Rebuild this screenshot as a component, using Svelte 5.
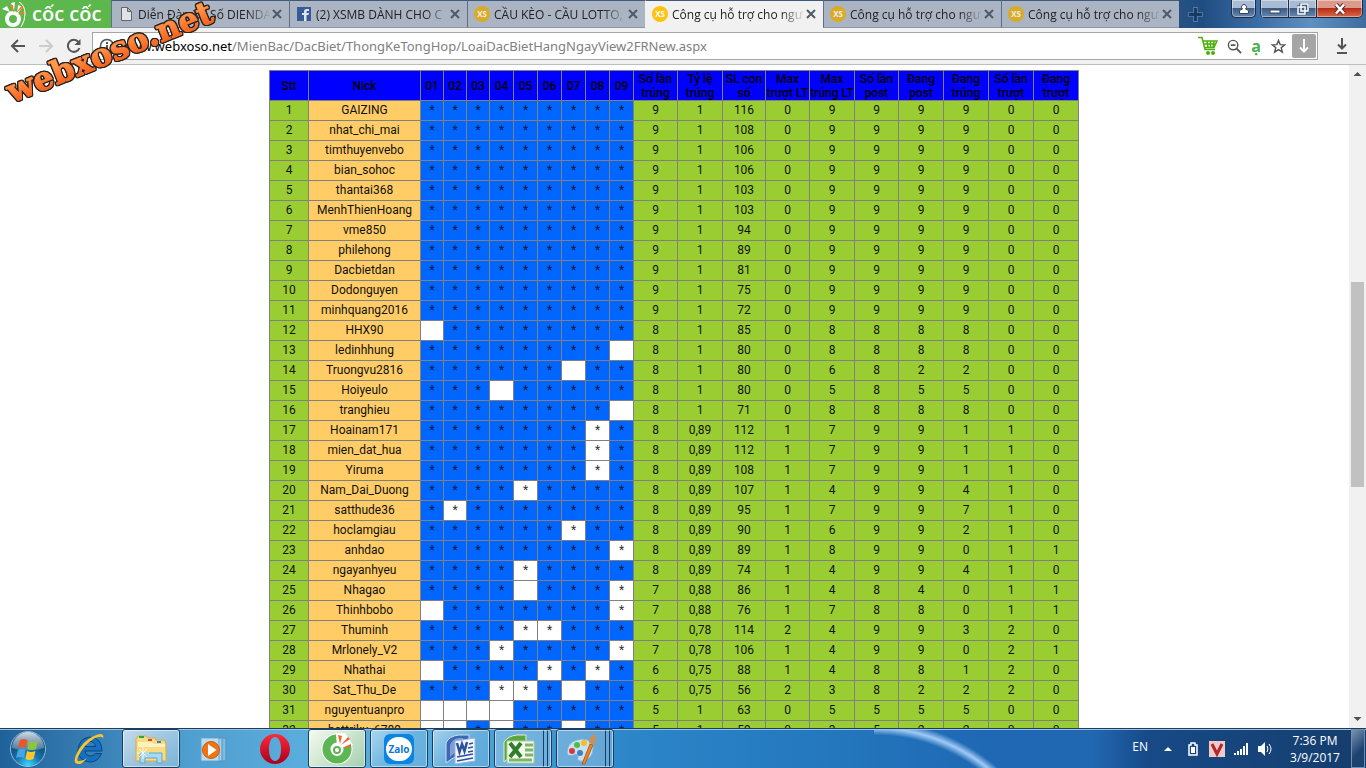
<script lang="ts">
	type Tab = { title: string; icon: 'page' | 'fb' | 'xs'; active?: boolean };

	const tabs: Tab[] = [
		{ title: 'Diễn Đàn Xổ Số DIENDA', icon: 'page' },
		{ title: '(2) XSMB DÀNH CHO C', icon: 'fb' },
		{ title: 'CẦU KÈO - CẦU LOTTO,', icon: 'xs' },
		{ title: 'Công cụ hỗ trợ cho ngư', icon: 'xs', active: true },
		{ title: 'Công cụ hỗ trợ cho ngư', icon: 'xs' },
		{ title: 'Công cụ hỗ trợ cho ngư', icon: 'xs' }
	];

	const days = ['01', '02', '03', '04', '05', '06', '07', '08', '09'];
	const statHeads = [
		'Số lần trúng', 'Tỷ lệ trúng', 'SL con số', 'Max trượt LT', 'Max trúng LT',
		'Số lần post', 'Đang post', 'Đang trúng', 'Số lần trượt', 'Đang trượt'
	];

	// days: * = hit, o = posted but missed, - = no post
	const data: [string, string, string][] = [
		['GAIZING', '*********', '9 1 116 0 9 9 9 9 0 0'],
		['nhat_chi_mai', '*********', '9 1 108 0 9 9 9 9 0 0'],
		['timthuyenvebo', '*********', '9 1 106 0 9 9 9 9 0 0'],
		['bian_sohoc', '*********', '9 1 106 0 9 9 9 9 0 0'],
		['thantai368', '*********', '9 1 103 0 9 9 9 9 0 0'],
		['MenhThienHoang', '*********', '9 1 103 0 9 9 9 9 0 0'],
		['vme850', '*********', '9 1 94 0 9 9 9 9 0 0'],
		['philehong', '*********', '9 1 89 0 9 9 9 9 0 0'],
		['Dacbietdan', '*********', '9 1 81 0 9 9 9 9 0 0'],
		['Dodonguyen', '*********', '9 1 75 0 9 9 9 9 0 0'],
		['minhquang2016', '*********', '9 1 72 0 9 9 9 9 0 0'],
		['HHX90', '-********', '8 1 85 0 8 8 8 8 0 0'],
		['ledinhhung', '********-', '8 1 80 0 8 8 8 8 0 0'],
		['Truongvu2816', '******-**', '8 1 80 0 6 8 2 2 0 0'],
		['Hoiyeulo', '***-*****', '8 1 80 0 5 8 5 5 0 0'],
		['tranghieu', '********-', '8 1 71 0 8 8 8 8 0 0'],
		['Hoainam171', '*******o*', '8 0,89 112 1 7 9 9 1 1 0'],
		['mien_dat_hua', '*******o*', '8 0,89 112 1 7 9 9 1 1 0'],
		['Yiruma', '*******o*', '8 0,89 108 1 7 9 9 1 1 0'],
		['Nam_Dai_Duong', '****o****', '8 0,89 107 1 4 9 9 4 1 0'],
		['satthude36', '*o*******', '8 0,89 95 1 7 9 9 7 1 0'],
		['hoclamgiau', '******o**', '8 0,89 90 1 6 9 9 2 1 0'],
		['anhdao', '********o', '8 0,89 89 1 8 9 9 0 1 1'],
		['ngayanhyeu', '****o****', '8 0,89 74 1 4 9 9 4 1 0'],
		['Nhagao', '****-***o', '7 0,88 86 1 4 8 4 0 1 1'],
		['Thinhbobo', '-*******o', '7 0,88 76 1 7 8 8 0 1 1'],
		['Thuminh', '****oo***', '7 0,78 114 2 4 9 9 3 2 0'],
		['Mrlonely_V2', '***o****o', '7 0,78 106 1 4 9 9 0 2 1'],
		['Nhathai', '-****o*o*', '6 0,75 88 1 4 8 8 1 2 0'],
		['Sat_Thu_De', '***oo*-**', '6 0,75 56 2 3 8 2 2 2 0'],
		['nguyentuanpro', '----*****', '5 1 63 0 5 5 5 5 0 0'],
		['hattriku_6789', '--*-**-**', '5 1 59 0 3 5 2 2 0 0']
	];
	const rows = data.map(([nick, marks, stats]) => ({
		nick,
		marks: marks.split(''),
		stats: stats.split(' ')
	}));
</script>

<div class="screen">
	<header class="tabstrip">
		<div class="brand">
			<svg class="brand-icon" viewBox="0 0 28 28" aria-hidden="true">
				<circle cx="13" cy="19" r="6" fill="none" stroke="#fff" stroke-width="4" />
				<path d="M2 9l5-3 3 6zM11 3l4-1-1 9zM18 5l5 2-6 7z" fill="#fff" />
				<path d="M10 5l3 0 1 8zM16 13l6-8 2 2zM18 15l7-4v3z" fill="#f47b20" />
				<path d="M19 2q6 3 6 12 0 7-4 13" fill="none" stroke="#fff" stroke-width="1" />
			</svg>
			<span class="brand-name">cốc cốc</span>
		</div>
		<nav class="tabs">
			{#each tabs as tab}
				<div class="tab" class:active={tab.active}>
					{#if tab.icon === 'page'}
						<svg class="fav" viewBox="0 0 16 16" aria-hidden="true">
							<path d="M3.500 1.500h6l4 4v9h-10zM9.500 1.500v4h4" fill="#dfe2e7" stroke="#666" />
						</svg>
					{:else if tab.icon === 'fb'}
						<svg class="fav" viewBox="0 0 16 16" aria-hidden="true">
							<rect x="1" y="1" width="14" height="14" fill="#3a5999" />
							<path d="M8 15V9H6V7h2V5.500Q8 3 10.500 3H13v2h-1.500Q10.500 5 10.500 6v1H13l-.5 2h-2v6z" fill="#dde3ec" />
						</svg>
					{:else}
						<span class="xs">XS</span>
					{/if}
					<a class="tab-title" href="#tab">{tab.title}</a>
					<button class="tab-close" aria-label="Close tab">
						<svg viewBox="0 0 10 10"><path d="M1 1l8 8M9 1l-8 8" /></svg>
					</button>
				</div>
			{/each}
		</nav>
		<button class="new-tab" aria-label="New tab">
			<svg viewBox="0 0 16 16">
				<path d="M8 0v16M0 8h16" stroke="#5b7da6" stroke-width="5" />
				<path d="M8 1v14M1 8h14" stroke="#163a63" stroke-width="3" />
			</svg>
		</button>
		<div class="window-controls">
			<button class="win user" aria-label="Profile">
				<svg viewBox="0 0 12 12"><path d="M1.500 10.500v-3l3-1.500a2.500 2.500 0 1 1 3 0l3 1.500v3z" fill="#fff" stroke="#38445a" /></svg>
			</button>
			<div class="win-group">
				<button class="win" aria-label="Minimize">
					<svg viewBox="0 0 12 12"><rect x="1" y="7" width="10" height="3" fill="#fff" stroke="#38445a" /></svg>
				</button>
				<button class="win" aria-label="Restore">
					<svg viewBox="0 0 12 12">
						<path d="M4 1h7v7H4zM1 4h7v7H1z" fill="none" stroke="#38445a" stroke-width="3" />
						<path d="M4 1h7v7H4zM1 4h7v7H1z" fill="#44608a" stroke="#fff" stroke-width="1.500" />
					</svg>
				</button>
				<button class="win close" aria-label="Close">
					<svg viewBox="0 0 12 12">
						<path d="M2 1.500l8 9M10 1.500l-8 9" stroke="#5a2a30" stroke-width="4.500" />
						<path d="M2 1.500l8 9M10 1.500l-8 9" stroke="#fff" stroke-width="2.500" />
					</svg>
				</button>
			</div>
		</div>
	</header>

	<div class="toolbar">
		<button class="tool" aria-label="Back">
			<svg viewBox="0 0 16 16"><path d="M15 8H2M8 2L2 8l6 6" /></svg>
		</button>
		<button class="tool off" aria-label="Forward">
			<svg viewBox="0 0 16 16"><path d="M1 8h13M8 2l6 6-6 6" /></svg>
		</button>
		<button class="tool" aria-label="Reload">
			<svg viewBox="0 0 16 16">
				<path d="M13.500 10A6 6 0 1 1 12.500 4" />
				<path d="M14.500 1v6h-6z" fill="#555" stroke="none" />
			</svg>
		</button>
		<div class="omnibox">
			<svg class="info" viewBox="0 0 16 16" aria-hidden="true">
				<circle cx="8" cy="8" r="6.500" fill="none" stroke="#555" stroke-width="1.500" />
				<path d="M8 4v2M8 7v5" stroke="#555" stroke-width="2" />
			</svg>
			<div class="url"><span>www.webxoso.net</span>/MienBac/DacBiet/ThongKeTongHop/LoaiDacBietHangNgayView2FRNew.aspx</div>
			<button class="act cart" aria-label="Shopping">
				<svg viewBox="0 0 20 20">
					<path d="M0 1.500h4l3 12h10M5 5h14l-3 6.500H6.500M6 8h12M9 5l1 6M12.500 5v6M16 5l-1 6" fill="none" stroke="#4caf0c" stroke-width="1.500" />
					<circle cx="10" cy="17" r="2" fill="#4caf0c" /><circle cx="15" cy="17" r="2" fill="#4caf0c" />
				</svg>
			</button>
			<button class="act" aria-label="Zoom out">
				<svg viewBox="0 0 16 16"><circle cx="6.500" cy="6.500" r="5" fill="none" stroke="#555" stroke-width="1.500" /><path d="M10 10l5 5M4 6.500h5" stroke="#555" stroke-width="2" /></svg>
			</button>
			<button class="act accent" aria-label="Vietnamese accents">ạ</button>
			<button class="act" aria-label="Bookmark">
				<svg viewBox="0 0 16 16"><path d="M8 1.500l1.800 4.500 4.700.3-3.600 3 1.200 4.700L8 11.400 3.900 14l1.200-4.700-3.600-3 4.700-.3z" fill="none" stroke="#555" stroke-width="1.500" /></svg>
			</button>
			<button class="save" aria-label="Download media">
				<svg viewBox="0 0 16 16"><path d="M8 1v12M4 9.500l4 4 4-4" fill="none" stroke="#fff" stroke-width="2" /></svg>
			</button>
		</div>
		<button class="tool downloads" aria-label="Downloads">
			<svg viewBox="0 0 16 16"><path d="M8 0v10M4 6.500l4 4 4-4M3 15h10" /></svg>
		</button>
	</div>

	<div class="viewport">
		<main class="page">
			<table>
				<colgroup>
					<col class="c-stt" />
					<col class="c-nick" />
					<col class="c-day-s" span="3" />
					<col class="c-day" span="6" />
					<col class="c-44" />
					<col class="c-45" />
					<col class="c-43" />
					<col class="c-44" />
					<col class="c-45" />
					<col class="c-44" />
					<col class="c-45" span="4" />
				</colgroup>
				<thead>
					<tr>
						<th>Stt</th>
						<th>Nick</th>
						{#each days as day}<th>{day}</th>{/each}
						{#each statHeads as head}<th>{head}</th>{/each}
					</tr>
				</thead>
				<tbody>
					{#each rows as row, i}
						<tr>
							<td>{i + 1}</td>
							<td class="nick">{row.nick}</td>
							{#each row.marks as mark}
								<td class={mark === '*' ? 'hit' : 'miss'}>{mark === '-' ? '' : '*'}</td>
							{/each}
							{#each row.stats as stat}<td>{stat}</td>{/each}
						</tr>
					{/each}
				</tbody>
			</table>
		</main>
		<div class="scrollbar">
			<svg class="arrow" viewBox="0 0 17 17" aria-hidden="true"><path d="M8.500 7l4 4h-8z" fill="#505050" /></svg>
			<div class="before"></div>
			<div class="thumb"></div>
			<div class="after"></div>
			<svg class="arrow" viewBox="0 0 17 17" aria-hidden="true"><path d="M4.500 6h8l-4 4z" fill="#505050" /></svg>
		</div>
	</div>

	<footer class="taskbar">
		<button class="start" aria-label="Start">
			<svg viewBox="0 0 38 38">
				<defs>
					<radialGradient id="orb" cx=".5" cy=".95" r=".8">
						<stop offset="0" stop-color="#35d6ff" /><stop offset=".45" stop-color="#1672a8" /><stop offset="1" stop-color="#123f6e" />
					</radialGradient>
					<linearGradient id="shine" x2="0" y2="1"><stop offset="0" stop-color="#fff" stop-opacity=".8" /><stop offset="1" stop-color="#fff" stop-opacity=".2" /></linearGradient>
				</defs>
				<circle cx="19" cy="19" r="17.500" fill="url(#orb)" stroke="#8cc0dc" />
				<path d="M3 18a16 16 0 0 1 32 0q-16 5-32 0z" fill="url(#shine)" />
				<path d="M11 10q4-2 7.500 0l-1.500 8q-4-2-8 0z" fill="#e8562a" />
				<path d="M20 11q4 2 9 0l-2 8q-4 2-8.500 0z" fill="#8cc63f" />
				<path d="M9 20q4-2 7.500 0l-1.500 8q-4-2-8 0z" fill="#45a5e6" />
				<path d="M18 21q4 2 8.500 0l-2 8q-4 2-8 0z" fill="#ffc72c" />
			</svg>
		</button>
		<button class="task" aria-label="Internet Explorer">
			<svg viewBox="0 0 32 32">
				<path d="M29 18H12q1 5 5.500 5 3 0 5-2.500h6Q25 29 17 29 5 28 5 17 6 5 17 4q12 1 12 14zM12 13.500h10.500q-1-5-5.250-5t-5.250 5z" fill="#1470c0" stroke="#0a4580" />
				<path d="M7 31q-8 1-4-9Q9 8 21 3q11-5 9 3 0-4-8-1Q10 12 5 24q-2 5 2 4 3 0 7-3-4 5-7 6z" fill="#f8c52c" />
			</svg>
		</button>
		<button class="task open bright" aria-label="Windows Explorer">
			<svg viewBox="0 0 32 32">
				<path d="M1 6l2-3h8l2 2h7l1 2h8l2 3v18H1z" fill="#f7dc85" stroke="#d6ab4b" />
				<path d="M3 9h14l2 2h11v3H3z" fill="#fff2bd" />
				<rect x="4" y="3" width="5" height="2" fill="#28a745" /><rect x="13" y="6" width="4" height="2" fill="#d84a33" /><rect x="22" y="8" width="4" height="2" fill="#2784d8" />
				<path d="M5 30V20h22v10h-5v-5H10v5z" fill="#a7daf2" stroke="#5ba9cf" />
				<path d="M8 14v12M2 20h12M4 16l8 8M12 16l-8 8" stroke="#fff" stroke-opacity=".8" />
			</svg>
		</button>
		<button class="task" aria-label="Windows Media Player">
			<svg viewBox="0 0 32 32">
				<path d="M10 5h19v23H10z" fill="#7dbbe0" stroke="#5592c0" />
				<path d="M7 5h18v23H7z" fill="#a4d2ec" stroke="#5592c0" />
				<path d="M4 5h18v23H4z" fill="#b9ddf0" stroke="#6aa5ce" />
				<circle cx="14" cy="17" r="8.500" fill="#ee7416" stroke="#cf5a0d" />
				<path d="M11 11l8.500 6-8.500 6z" fill="#fff" />
			</svg>
		</button>
		<button class="task" aria-label="Opera">
			<svg viewBox="0 0 32 32">
				<defs><linearGradient id="opera" x2="0" y2="1"><stop offset="0" stop-color="#ff2939" /><stop offset="1" stop-color="#a8001c" /></linearGradient></defs>
				<path fill-rule="evenodd" d="M16 1a15 15 0 1 1 0 30 15 15 0 0 1 0-30zm0 3c-4 0-6 5-6 12s2 12 6 12 6-5 6-12-2-12-6-12z" fill="url(#opera)" />
			</svg>
		</button>
		<button class="task open current" aria-label="Cốc Cốc">
			<svg viewBox="0 0 32 32">
				<circle cx="16" cy="16" r="15.500" fill="#fff" />
				<circle cx="16" cy="16" r="10.500" fill="none" stroke="#5bb653" stroke-width="8" />
				<path d="M16 16L15 0h9l8 12z" fill="#fff" />
				<path d="M17 2l4 1-2 8zM20 12l7-8 2 2zM21 15l9-4v3z" fill="#f0642c" />
				<circle cx="16" cy="17" r="5" fill="#5bb653" stroke="#fff" stroke-width="2" />
				<circle cx="16" cy="17" r="2" fill="#fff" />
			</svg>
		</button>
		<button class="task open" aria-label="Zalo">
			<span class="zalo"><span>Zalo</span></span>
		</button>
		<button class="task open" aria-label="Word">
			<svg viewBox="0 0 32 32">
				<path d="M1 30V10Q4 3 14 2h10v19Q13 20 1 30z" fill="#3e66b6" stroke="#cbdcf3" />
				<path d="M5 24V12q2-6 9-7h4v13Q10 18 5 24z" fill="#7e9ed5" />
				<path d="M10 8l20-3v23l-20 3z" fill="#f3f8ff" stroke="#9ab6dc" />
				<path d="M12 10l2.500 9L17 11l2.500 7L22 9" fill="none" stroke="#2c529e" stroke-width="2.500" />
				<path d="M24 11l4-1M23 15l5-1M23 19l5-1M12 24l16-3M12 28l16-3" stroke="#2c529e" stroke-width="1.500" />
			</svg>
		</button>
		<button class="task open stack" aria-label="Excel">
			<svg viewBox="0 0 32 32">
				<path d="M1 29V9Q5 3 14 2h9v17Q10 19 1 29z" fill="#5ca640" stroke="#dceed2" />
				<path d="M4 8h27v22H4z" fill="#f2faee" stroke="#a9cf9d" />
				<path d="M22 12h8M22 17h8M22 22h8M6 27h23" stroke="#7eb56b" stroke-width="3" />
				<path d="M7 10l11 14M18 10L7 24" stroke="#2f7f2a" stroke-width="4" />
			</svg>
		</button>
		<button class="task open stack" aria-label="Paint">
			<svg viewBox="0 0 32 32">
				<path d="M2 19Q3 7 17 6q13 1 11 11-1 8-9 11-8 1-6-4 0-4-4-2-7 2-7-3z" fill="#c9e2f3" stroke="#86b2d2" />
				<circle cx="7" cy="18" r="3" fill="#d83b36" /><circle cx="12" cy="12" r="3" fill="#54b948" /><circle cx="19" cy="10" r="3" fill="#f5bc28" /><circle cx="15" cy="20" r="3" fill="#3b82c9" />
				<path d="M17 31l8-20 3 1-8 19z" fill="#e8842c" stroke="#b2601c" />
				<path d="M24 10q-1-7 6-9 3 5-1 11z" fill="#c19362" />
			</svg>
		</button>
		<div class="tray">
			<span class="lang">EN</span>
			<svg class="caret" viewBox="0 0 8 8" aria-hidden="true"><path d="M4 2l4 4H0z" fill="#fff" /></svg>
			<svg viewBox="0 0 16 16" aria-hidden="true"><path d="M6 2h4v2h2v10H4V4h2z" fill="none" stroke="#fff" stroke-width="1.500" /><path d="M6 6h4v6H6z" fill="#fff" /></svg>
			<svg viewBox="0 0 16 16" aria-hidden="true"><rect width="16" height="16" fill="#f0c9c9" /><path d="M3 3l5 10 5-10" fill="none" stroke="#b3262c" stroke-width="3" /></svg>
			<svg viewBox="0 0 16 16" aria-hidden="true"><path d="M2 14v-2M5 14v-4M8 14V8M11 14V5M14 14V2" stroke="#fff" stroke-width="2" /></svg>
			<svg viewBox="0 0 16 16" aria-hidden="true"><path d="M1 5h3l4-4v14l-4-4H1z" fill="#fff" /><path d="M10 5q2 3 0 6M12 3q4 5 0 10" fill="none" stroke="#fff" /></svg>
			<time class="clock">7:36 PM<br />3/9/2017</time>
			<button class="show-desktop" aria-label="Show desktop"></button>
		</div>
	</footer>

	<svg class="watermark" viewBox="0 0 230 110">
		<defs>
			<linearGradient id="flame" x2="0" y2="1"><stop offset="0.300" stop-color="#ff9a4d" /><stop offset="0.800" stop-color="#fb5f1c" /></linearGradient>
		</defs>
		<text x="12" y="103" transform="rotate(-22 12 103)">webxoso.net</text>
	</svg>
</div>

<style>
	:global(body) {
		margin: 0;
		overflow: hidden;
	}
	.screen {
		position: relative;
		display: flex;
		flex-direction: column;
		height: 100vh;
		background: #fff;
		font-family: 'Open Sans', 'Noto Sans', sans-serif;
		font-size: 13px;
		color: #000;
	}
	button {
		display: flex;
		align-items: center;
		justify-content: center;
		padding: 0;
		border: 0;
		background: none;
		box-sizing: border-box;
		flex: none;
	}
	svg {
		display: block;
		flex: none;
	}

	/* tab strip */
	.tabstrip {
		display: flex;
		height: 28px;
		background: linear-gradient(90deg, #4a6484 80%, #1f4c80 88%, #3b6da5 92%, #5f8fc0 96%, #3e6c9e);
	}
	.brand {
		display: flex;
		align-items: center;
		gap: 4px;
		width: 111px;
		background: #5cb84c;
		color: #fff;
	}
	.brand-icon {
		width: 28px;
		height: 28px;
	}
	.brand-name {
		font: 600 20px/28px 'Open Sans', sans-serif;
	}
	.tabs {
		display: flex;
		flex: 0 1 1068px;
		min-width: 0;
	}
	.tab {
		display: flex;
		align-items: center;
		flex: 1;
		min-width: 0;
		box-sizing: border-box;
		padding: 0 7px 0 6px;
		border-top: 1px solid #3f5a7c;
		border-left: 1px solid #5d6f88;
		border-bottom: 1px solid #8a97a8;
		background: #aab4c2;
	}
	.tab.active {
		background: #f1f1f1;
		border-bottom-color: #f1f1f1;
		border-left-color: #f1f1f1;
	}
	.fav {
		width: 16px;
		height: 16px;
	}
	.xs {
		width: 16px;
		height: 16px;
		border-radius: 50%;
		background: #d9ab26;
		color: #eee;
		font: 700 8px/16px 'Open Sans', sans-serif;
		text-align: center;
		flex: none;
	}
	.active .xs {
		background: #ffc20e;
		color: #fff;
	}
	.tab-title {
		flex: 1;
		min-width: 0;
		margin: 0 1px 0 4px;
		overflow: hidden;
		white-space: nowrap;
		color: #222;
		font-size: 12px;
		text-decoration: none;
		mask-image: linear-gradient(90deg, #000 82%, transparent);
	}
	.tab-close svg {
		width: 10px;
		height: 10px;
		stroke: #505967;
		stroke-width: 2;
	}
	.new-tab {
		width: 32px;
	}
	.new-tab svg {
		width: 15px;
		height: 15px;
	}
	.window-controls {
		display: flex;
		align-items: flex-start;
		gap: 4px;
		margin-left: auto;
		padding-right: 3px;
	}
	.win {
		width: 28px;
		height: 18px;
		border: solid #1c2c44;
		border-width: 0 1px 1px 0;
		background: linear-gradient(#a9bcd3 45%, #3d5c86 50%, #6688b0);
		box-shadow: inset 0 0 0 1px #ffffff66;
	}
	.win svg {
		width: 12px;
		height: 12px;
	}
	.user {
		width: 25px;
		border-left-width: 1px;
		border-radius: 0 0 5px 5px;
	}
	.win-group {
		display: flex;
		border-left: 1px solid #1c2c44;
		border-radius: 0 0 5px 5px;
		overflow: hidden;
	}
	.close {
		width: 46px;
		border-radius: 0 0 5px 0;
		background: linear-gradient(#dc9a8c 45%, #bb2c16 50%, #d8694a);
	}

	/* toolbar */
	.toolbar {
		display: flex;
		align-items: center;
		height: 36px;
		padding-left: 4px;
		border-bottom: 1px solid #bdbdbd;
		background: #f1f1f1;
	}
	.tool {
		width: 28px;
		height: 28px;
	}
	.tool svg {
		width: 16px;
		height: 16px;
		fill: none;
		stroke: #555;
		stroke-width: 2;
	}
	.off svg {
		stroke: #ccc;
	}
	.omnibox {
		display: flex;
		align-items: center;
		flex: 1;
		min-width: 0;
		height: 28px;
		margin-left: 4px;
		padding: 0 1px 0 6px;
		box-sizing: border-box;
		border: 1px solid #a5a5a5;
		background: #fff;
	}
	.info {
		width: 16px;
		height: 16px;
	}
	.url {
		flex: 1;
		min-width: 0;
		margin-left: 6px;
		overflow: hidden;
		white-space: nowrap;
		font-family: 'Noto Sans', sans-serif;
		color: #808080;
	}
	.url span {
		color: #000;
	}
	.act {
		width: 22px;
		height: 24px;
	}
	.act svg {
		width: 15px;
		height: 15px;
	}
	.cart {
		width: 30px;
	}
	.cart svg {
		width: 20px;
		height: 20px;
	}
	.accent {
		color: #4caf50;
		font: 700 16px/24px 'Open Sans', sans-serif;
	}
	.save {
		width: 24px;
		height: 24px;
		margin-left: 3px;
		border-radius: 2px;
		background: #a5a5a5;
	}
	.save svg {
		width: 16px;
		height: 16px;
	}
	.downloads {
		width: 48px;
	}

	/* page */
	.viewport {
		display: flex;
		flex: 1;
		min-height: 0;
	}
	.page {
		flex: 1;
		min-width: 0;
		padding: 5px 1px 0 0;
		overflow: hidden;
	}
	table {
		width: 810px;
		margin: 0 auto;
		table-layout: fixed;
		border-collapse: separate;
		border-spacing: 0;
		border: solid #808080;
		border-width: 1px 0 0 1px;
		box-sizing: border-box;
		font: 12px/14px Roboto, sans-serif;
		text-align: center;
	}
	.c-stt { width: 39px; }
	.c-nick { width: 112px; }
	.c-day-s { width: 23px; }
	.c-day { width: 24px; }
	.c-43 { width: 43px; }
	.c-44 { width: 44px; }
	.c-45 { width: 45px; }
	th,
	td {
		box-sizing: border-box;
		height: 20px;
		padding: 0 0 2px;
		border: solid #808080;
		border-width: 0 1px 1px 0;
		background: #9acd32;
		color: #111;
	}
	th {
		height: 30px;
		padding: 0;
		background: #00f;
		color: #000;
		font-weight: 500;
	}
	.nick {
		background: #fc6;
	}
	.hit {
		background: #06f;
		color: #001530;
	}
	.miss {
		background: #fff;
		color: #333;
	}

	.scrollbar {
		display: flex;
		flex-direction: column;
		align-items: center;
		width: 17px;
		background: #f1f1f1;
	}
	.arrow {
		width: 17px;
		height: 17px;
	}
	.before { flex: 200; }
	.thumb {
		flex: 205;
		width: 13px;
		background: #c1c1c1;
	}
	.after { flex: 224; }

	/* taskbar */
	.taskbar {
		display: flex;
		gap: 4px;
		height: 40px;
		box-sizing: border-box;
		border-top: 1px solid #1f3c5c;
		background:
			radial-gradient(circle at 0 180px, transparent 174px, #a0caf5 181px, transparent 188px) no-repeat right / 36% 100%,
			linear-gradient(90deg, #20619a, #4f9fd0 14%, #5cb0de 24%, #4a9fd6 36%, #2c86c8 46%, #2478be 60%, #1f68b4 72%, #2168b2 80%, #174a87 84%, #153d6c);
		box-shadow: inset 0 1px #9cc4e2;
	}
	.start {
		width: 56px;
	}
	.start svg {
		width: 38px;
		height: 38px;
	}
	.task {
		width: 58px;
		height: 39px;
	}
	.task svg {
		width: 32px;
		height: 32px;
	}
	.open {
		border: 1px solid #173f66;
		border-radius: 3px;
		background: linear-gradient(135deg, #ffffff80, #ffffff26 50%, #ffffff1a);
		box-shadow: inset 0 0 0 1px #ffffff80;
	}
	.bright {
		background: linear-gradient(135deg, #ffffffb3, #ffffff40);
	}
	.current {
		background: linear-gradient(135deg, #f4fbf0, #a5cfae);
	}
	.stack {
		padding-right: 8px;
		background: linear-gradient(90deg, #ffffff40 48px, #173f66 48px 49px, #ffffff40 49px 52px, #173f66 52px 53px, #ffffff40 53px);
	}
	.zalo {
		display: flex;
		width: 30px;
		height: 30px;
		border-radius: 6px;
		background: #0a84e0;
		align-items: center;
		justify-content: center;
	}
	.zalo span {
		width: 26px;
		height: 24px;
		border-radius: 12px;
		background: #fff;
		color: #0a78d4;
		font: 700 10px/24px 'Open Sans', sans-serif;
	}
	.tray {
		display: flex;
		align-items: center;
		gap: 8px;
		margin-left: auto;
		color: #fff;
		font-size: 12px;
	}
	.tray svg {
		width: 16px;
		height: 16px;
	}
	.lang {
		margin-right: 8px;
		padding-bottom: 4px;
	}
	.tray .caret {
		width: 8px;
		height: 8px;
		margin-right: 5px;
	}
	.clock {
		width: 56px;
		margin-left: 6px;
		line-height: 17px;
		text-align: center;
	}
	.show-desktop {
		width: 14px;
		height: 39px;
		margin-right: 1px;
		border: 1px solid #6f8db0;
		background: linear-gradient(135deg, #7b93b0, #1c426f 60%);
	}

	/* stamped across the browser chrome */
	.watermark {
		position: absolute;
		top: 0;
		left: 0;
		width: 230px;
		height: 110px;
		pointer-events: none;
		filter: drop-shadow(1px 0 #222) drop-shadow(-1px 0 #222) drop-shadow(0 1px #222) drop-shadow(0 -1px #222);
	}
	.watermark text {
		font: 700 32px 'DejaVu Serif', serif;
		fill: url(#flame);
		stroke: #fd7a30;
		stroke-width: 1;
		stroke-linejoin: round;
		paint-order: stroke;
	}
</style>
